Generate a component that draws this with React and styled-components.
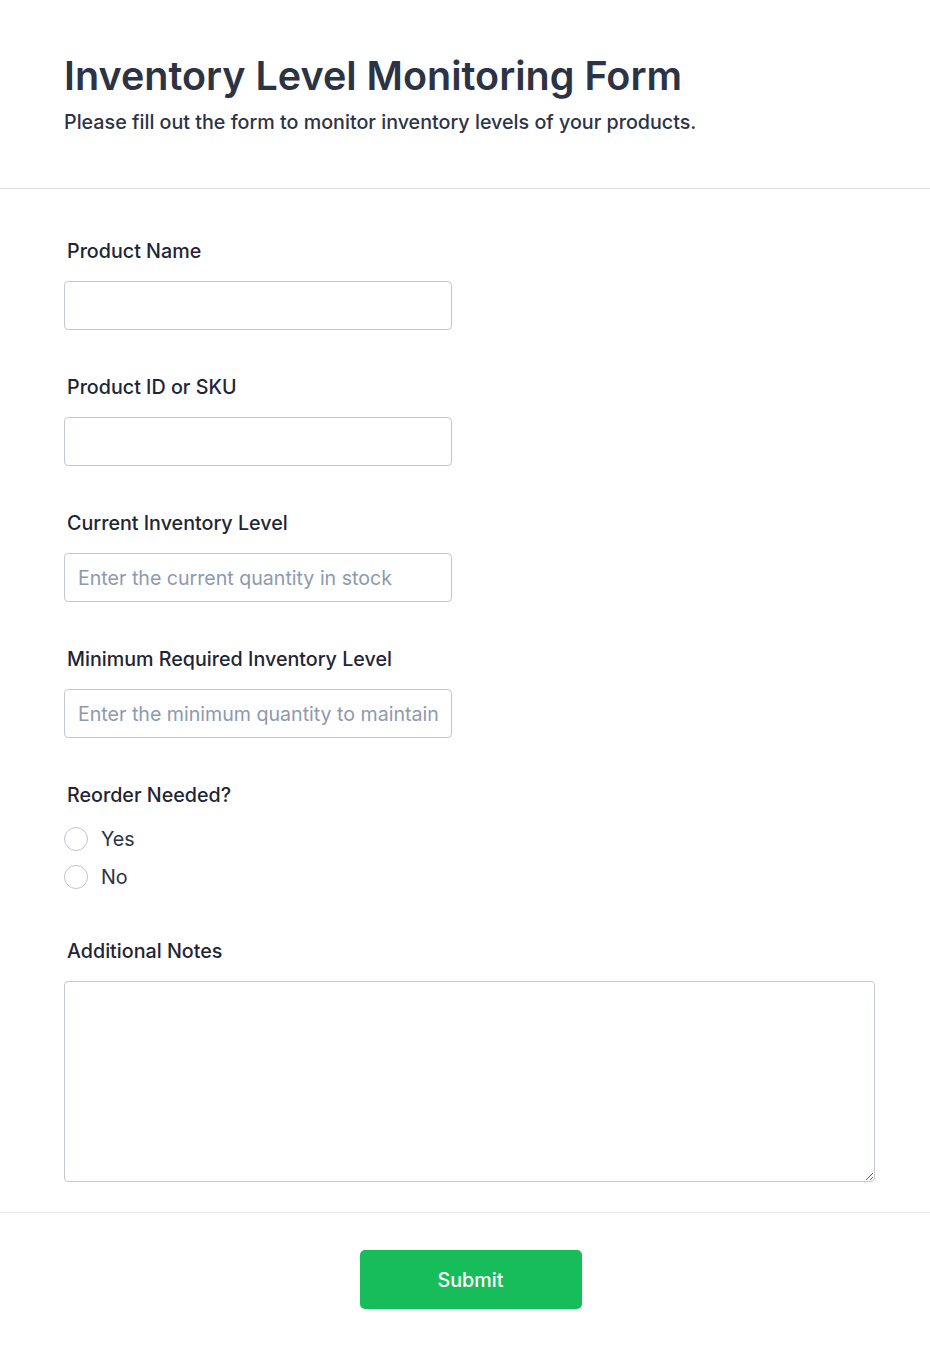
import React from 'react'
import styled, { createGlobalStyle } from 'styled-components'

const GlobalStyle = createGlobalStyle`
    body {
        margin: 0;
        background: #ffffff;
        font-family: Inter, "Noto Sans", Arial, sans-serif;
    }
`;

const Page = styled.div`
    width: 930px;
    background: #ffffff;
`;

const Header = styled.header`
    padding: 52px 64px 52px;
    border-bottom: 1px solid #dcdce8;
`;

const Title = styled.h1`
    margin: 0;
    font-size: 39.5px;
    line-height: 48px;
    font-weight: 600;
    color: #2c3345;
`;

const Subtitle = styled.p`
    margin: 9px 0 0;
    font-size: 19.7px;
    line-height: 27px;
    font-weight: 500;
    color: #2c3345;
`;

const FormBody = styled.div`
    padding: 48px 55px 30px 64px;
    border-bottom: 1px solid #e6e6ee;
`;

const Field = styled.div`
    display: flex;
    flex-direction: column;
    gap: ${p => p.$gap || 16}px;
    margin-bottom: ${p => p.$mb ?? 43}px;
`;

const Label = styled.label`
    padding-left: 3px;
    font-size: 19.7px;
    line-height: 28px;
    font-weight: 500;
    color: #1f2533;
`;

const Input = styled.input`
    box-sizing: border-box;
    width: 388px;
    height: 49px;
    padding: 0 8px 0 13px;
    border: 1px solid #c3c8d4;
    border-radius: 4px;
    font-family: inherit;
    font-size: 19.6px;
    color: #2c3345;
    outline: none;
    &::placeholder {
        color: #8d99b0;
    }
`;

const RadioList = styled.div`
    display: flex;
    flex-direction: column;
    gap: 14px;
`;

const RadioRow = styled.label`
    display: flex;
    align-items: center;
    gap: 13px;
    font-size: 19.7px;
    line-height: 24px;
    color: #2c3345;
`;

const Circle = styled.span`
    box-sizing: border-box;
    width: 24px;
    height: 24px;
    border: 1.5px solid #c0c4ce;
    border-radius: 50%;
    background: #fff;
`;

const TextArea = styled.textarea`
    box-sizing: border-box;
    display: block;
    width: 811px;
    height: 201px;
    border: 1px solid #c3c8d4;
    border-radius: 4px;
    padding: 12px;
    font-family: inherit;
    font-size: 19.7px;
    outline: none;
`;

const Footer = styled.div`
    display: flex;
    justify-content: center;
    padding: 37px 0 50px;
`;

const SubmitButton = styled.button`
    width: 222px;
    height: 59px;
    margin-left: 11px;
    border: none;
    border-radius: 5px;
    background: #18bd5b;
    color: #ffffff;
    font-family: inherit;
    font-size: 19.7px;
    font-weight: 500;
    cursor: pointer;
`;

export default function App() {
  return (
    <Page>
        <GlobalStyle />
        <Header>
            <Title>Inventory Level Monitoring Form</Title>
            <Subtitle>Please fill out the form to monitor inventory levels of your products.</Subtitle>
        </Header>
        <FormBody>
            <Field>
                <Label>Product Name</Label>
                <Input type="text" />
            </Field>
            <Field>
                <Label>Product ID or SKU</Label>
                <Input type="text" />
            </Field>
            <Field>
                <Label>Current Inventory Level</Label>
                <Input type="text" placeholder="Enter the current quantity in stock" />
            </Field>
            <Field>
                <Label>Minimum Required Inventory Level</Label>
                <Input type="text" placeholder="Enter the minimum quantity to maintain" />
            </Field>
            <Field $gap={18} $mb={48}>
                <Label>Reorder Needed?</Label>
                <RadioList>
                    <RadioRow><Circle />Yes</RadioRow>
                    <RadioRow><Circle />No</RadioRow>
                </RadioList>
            </Field>
            <Field $mb={0}>
                <Label>Additional Notes</Label>
                <TextArea />
            </Field>
        </FormBody>
        <Footer>
            <SubmitButton>Submit</SubmitButton>
        </Footer>
    </Page>
  )
}
